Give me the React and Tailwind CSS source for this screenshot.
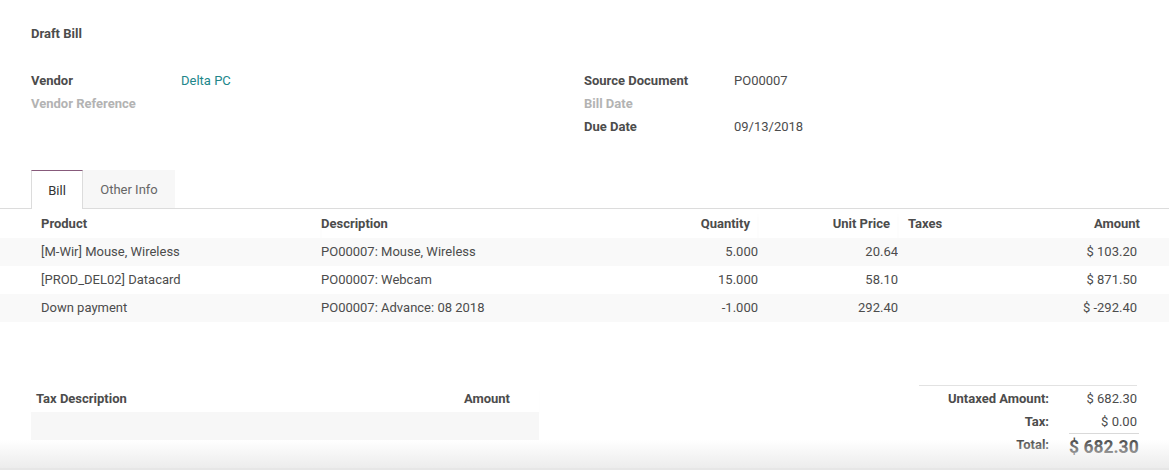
import React from 'react';

const lines = [
  { product: '[M-Wir] Mouse, Wireless', desc: 'PO00007: Mouse, Wireless', qty: '5.000', price: '20.64', amount: '$ 103.20' },
  { product: '[PROD_DEL02] Datacard', desc: 'PO00007: Webcam', qty: '15.000', price: '58.10', amount: '$ 871.50' },
  { product: 'Down payment', desc: 'PO00007: Advance: 08 2018', qty: '-1.000', price: '292.40', amount: '$ -292.40' },
];

function Field({ label, value, muted, link }) {
  return (
    <div className="flex h-[23px] items-center">
      <span className={`w-[150px] font-bold ${muted ? 'text-[#b3b3b3]' : 'text-[#4c4c4c]'}`}>{label}</span>
      <span className={link ? 'text-[#21868a]' : 'text-[#4c4c4c]'}>{value}</span>
    </div>
  );
}

const headShadow = 'shadow-[0_4px_4px_-2px_rgba(0,0,0,0.08)]';

export default function App() {
  return (
    <div className="relative h-[470px] w-[1169px] overflow-hidden bg-white text-[13px] text-[#4c4c4c]" style={{ fontFamily: 'Roboto, "Noto Sans", sans-serif' }}>
      <div className="px-[31px] pt-[25px]">
        <h2 className="h-[18px] leading-[18px] font-bold text-[#4c4c4c]">Draft Bill</h2>

        {/* header fields */}
        <div className="mt-[26px] grid grid-cols-[553px_1fr]">
          <div>
            <Field label="Vendor" value="Delta PC" link />
            <Field label="Vendor Reference" value="" muted />
          </div>
          <div>
            <Field label="Source Document" value="PO00007" />
            <Field label="Bill Date" value="" muted />
            <Field label="Due Date" value="09/13/2018" />
          </div>
        </div>
      </div>

      {/* tabs */}
      <div className="mt-[32px] flex h-[39px] border-b border-[#dcdcdc] pl-[31px]">
        <div className="-mb-px flex w-[52px] items-center justify-center border-x border-t border-[#dcdcdc] border-t-[#875a7b] bg-white pt-[2px] text-[#333]">Bill</div>
        <div className="flex w-[92px] items-center justify-center bg-[#f7f7f7] pt-[2px] text-[#666]">Other Info</div>
      </div>

      {/* lines table */}
      <div className="grid grid-cols-[321px_437px_140px_1fr]">
        <div className={`flex h-[29px] items-center pl-[41px] font-bold ${headShadow}`}>Product</div>
        <div className={`flex h-[29px] items-center justify-between pr-[8px] font-bold ${headShadow}`}>
          <span>Description</span>
          <span>Quantity</span>
        </div>
        <div className={`flex h-[29px] items-center justify-end pr-[8px] font-bold ${headShadow}`}>Unit Price</div>
        <div className={`flex h-[29px] items-center justify-between pl-[10px] pr-[29px] font-bold ${headShadow}`}>
          <span>Taxes</span>
          <span>Amount</span>
        </div>
        {lines.map((l, i) => {
          const bg = i % 2 === 0 ? 'bg-[#f9f9f9]' : 'bg-white';
          return (
            <React.Fragment key={i}>
              <div className={`flex h-[28px] items-center pl-[41px] ${bg}`}>{l.product}</div>
              <div className={`flex h-[28px] items-center justify-between ${bg}`}>
                <span>{l.desc}</span>
                <span>{l.qty}</span>
              </div>
              <div className={`flex h-[28px] items-center justify-end ${bg}`}>{l.price}</div>
              <div className={`flex h-[28px] items-center justify-end pr-[32px] ${bg}`}>{l.amount}</div>
            </React.Fragment>
          );
        })}
      </div>

      {/* bottom: taxes + totals */}
      <div className="mt-[63px] flex justify-between pl-[31px] pr-[32px]">
        <div className="w-[508px]">
          <div className="flex h-[27px] items-center justify-between pl-[5px] pr-[29px] font-bold shadow-[0_4px_4px_-2px_rgba(0,0,0,0.06)]">
            <span>Tax Description</span>
            <span>Amount</span>
          </div>
          <div className="h-[28px] bg-[#f7f7f7]"></div>
        </div>
        <div className="w-[218px] border-t border-[#e2e2e2] pt-[1px]">
          <div className="flex h-[23px] items-center">
            <span className="w-[130px] shrink-0 text-right font-bold">Untaxed Amount:</span>
            <span className="flex-1 text-right">$ 682.30</span>
          </div>
          <div className="flex h-[23px] items-center">
            <span className="w-[130px] shrink-0 text-right font-bold">Tax:</span>
            <span className="flex-1 text-right">$ 0.00</span>
          </div>
          <div className="flex h-[24px] items-start">
            <span className="w-[130px] shrink-0 pt-[2px] text-right font-bold">Total:</span>
            <span className="ml-[20px] flex-1 whitespace-nowrap border-t border-[#d9d9d9] pt-[3px] text-right text-[17.5px] leading-[20px] font-bold">$ 682.30</span>
          </div>
        </div>
      </div>

      {/* bottom fade of the sheet */}
      <div className="pointer-events-none absolute inset-x-0 bottom-0 h-[30px] border-b-2 border-[#e6e6e6] bg-gradient-to-b from-white/0 to-[#ececec]"></div>
    </div>
  );
}
